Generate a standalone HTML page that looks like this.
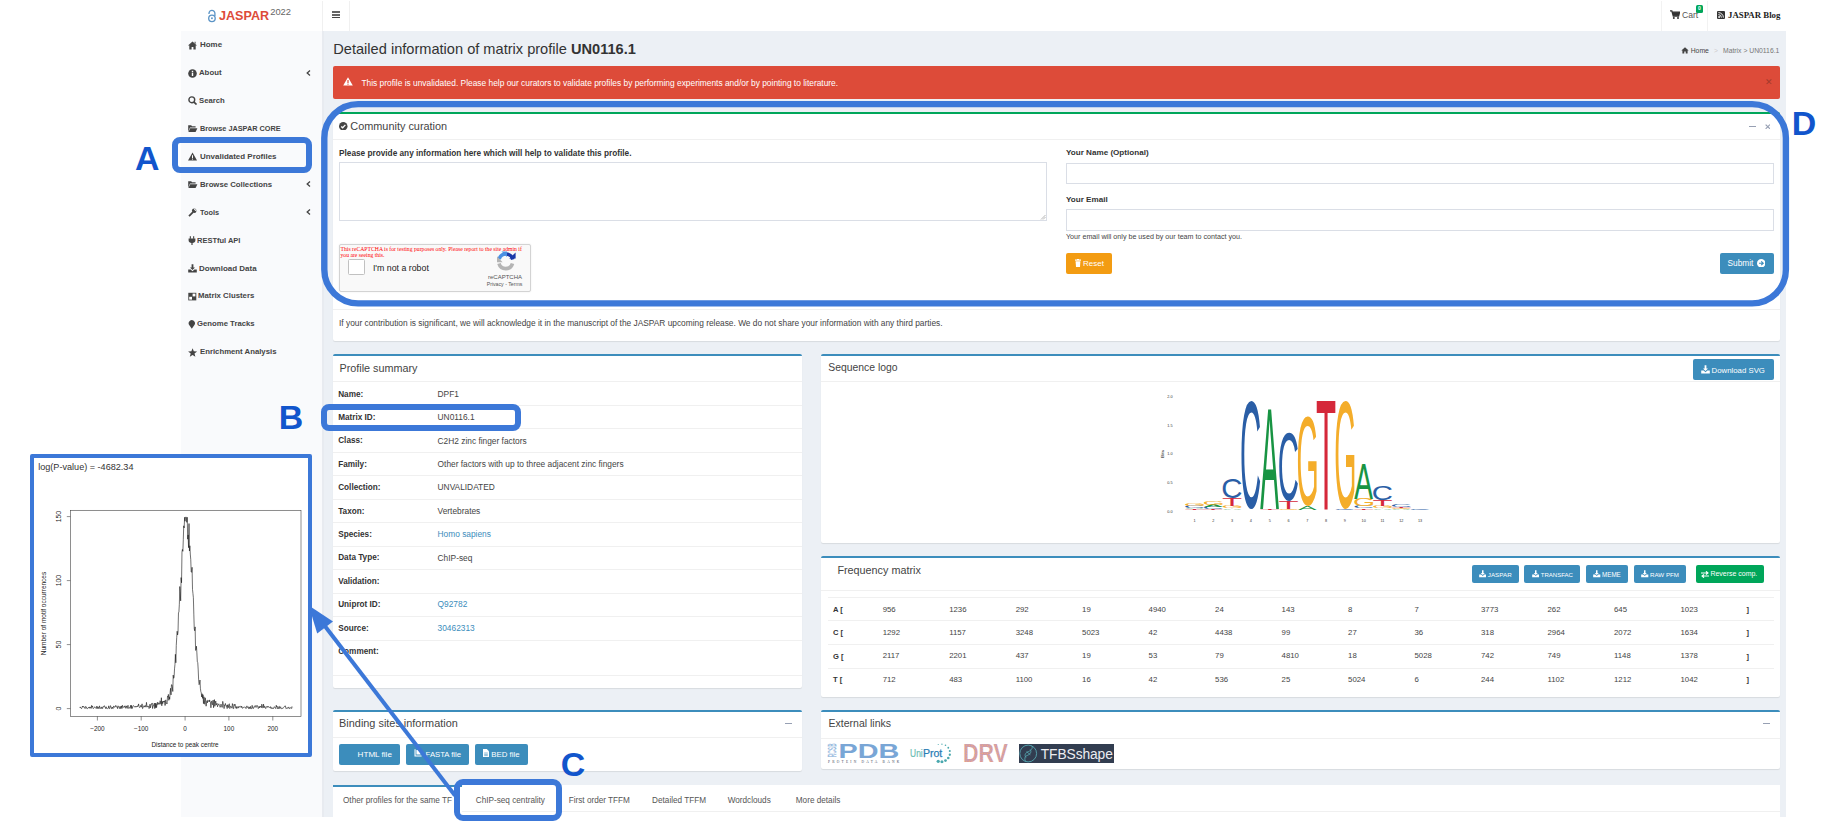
<!DOCTYPE html>
<html><head><meta charset="utf-8">
<style>
*{box-sizing:border-box}
html,body{margin:0;padding:0}
body{width:1829px;height:837px;position:relative;overflow:hidden;background:#fff;font-family:"Liberation Sans",sans-serif;color:#333}
.a{position:absolute}
.t{position:absolute;white-space:nowrap;line-height:1}
.b{font-weight:bold}
.box{position:absolute;background:#fff;border-top:2px solid #3c8dbc;border-radius:2px;box-shadow:0 1px 1px rgba(0,0,0,0.09)}
.hl{position:absolute;height:1px;background:#f0f0f0}
.btn{position:absolute;background:#3c8dbc;border-radius:2px;color:#fff}
.ann{position:absolute;border:6px solid #3c78d8}
.lbl{position:absolute;color:#1155cc;font-weight:bold;line-height:1;font-size:33px}
</style></head><body>
<div class="a" style="left:181px;top:0;width:1605px;height:31px;background:#fff"></div>
<div class="a" style="left:322px;top:1px;width:1px;height:30px;background:#f0f0f0"></div>
<div class="a" style="left:349px;top:1px;width:1px;height:30px;background:#f0f0f0"></div>
<div class="a" style="left:1661px;top:1px;width:1px;height:30px;background:#f2f2f2"></div>
<div class="a" style="left:1707px;top:1px;width:1px;height:30px;background:#f2f2f2"></div>
<svg class="a" style="left:206px;top:9px" width="12" height="14" viewBox="0 0 12 14">
 <path d="M3.0 4.9 V4.3 A2.95 2.95 0 0 1 8.9 4.3 V7" fill="none" stroke="#5b94c6" stroke-width="1.3"/>
 <circle cx="5.95" cy="9.3" r="3.25" fill="none" stroke="#5b94c6" stroke-width="1.35"/>
 <circle cx="5.95" cy="9.3" r="0.95" fill="#5b94c6"/>
</svg>
<div class="t b" style="left:219px;top:10px;font-size:12.6px;color:#dd4b39">JASPAR</div>
<div class="t" style="left:270.2px;top:7.4px;font-size:9.4px;color:#666">2022</div>
<div class="a" style="left:332px;top:11.2px;width:8px;height:1.5px;background:#666"></div>
<div class="a" style="left:332px;top:14.2px;width:8px;height:1.5px;background:#666"></div>
<div class="a" style="left:332px;top:17px;width:8px;height:1.3px;background:#444"></div>
<svg class="a" style="left:1670px;top:10px" width="10" height="9" viewBox="0 0 10 9">
 <path d="M0 0.8 H1.8 L3.3 6 H8.6 L9.6 2.2 H2.5" fill="none" stroke="#333" stroke-width="1.3"/>
 <rect x="3" y="2.2" width="6" height="3.6" fill="#333"/>
 <circle cx="3.8" cy="8" r="1" fill="#333"/><circle cx="8" cy="8" r="1" fill="#333"/>
</svg>
<div class="t" style="left:1682px;top:11px;font-size:8.6px;color:#555">Cart</div>
<div class="a" style="left:1696px;top:5px;width:7px;height:7.5px;background:#00a65a;border-radius:1.5px;color:#fff;font-size:5px;line-height:7.5px;text-align:center;font-weight:bold">0</div>
<svg class="a" style="left:1717px;top:11px" width="8" height="8" viewBox="0 0 8 8">
 <rect x="0" y="0" width="8" height="8" rx="1" fill="#333"/>
 <circle cx="2.1" cy="6" r="0.9" fill="#fff"/>
 <path d="M1.4 3.6 A3 3 0 0 1 4.4 6.6 M1.4 1.6 A5 5 0 0 1 6.4 6.6" fill="none" stroke="#fff" stroke-width="0.9"/>
</svg>
<div class="t b" style="left:1728px;top:10.8px;font-size:8.8px;font-family:'Liberation Serif',serif;color:#222">JASPAR Blog</div>
<div class="a" style="left:181px;top:31px;width:141px;height:786px;background:#f9fafc"></div>
<div class="a" style="left:322px;top:31px;width:2px;height:786px;background:#e8ebf0"></div>
<svg class="a" style="left:188.3px;top:40.6px" width="10" height="9" viewBox="0 0 10 9"><path d="M4.5 0.6 L0 4.6 H1.3 V8.5 H3.6 V6 H5.4 V8.5 H7.7 V4.6 H9 Z M6.6 0.8 H7.6 V3 L6.6 2.1Z" fill="#444"/></svg>
<div class="t b" style="left:200.4px;top:41.34px;font-size:8.1px;color:#444;transform:scaleX(0.9820);transform-origin:0 0;">Home</div>
<svg class="a" style="left:188px;top:68.5px" width="10" height="9" viewBox="0 0 10 9"><circle cx="4.5" cy="4.5" r="4.3" fill="#444"/><rect x="3.8" y="3.6" width="1.4" height="3.4" fill="#fff"/><rect x="3.8" y="1.8" width="1.4" height="1.2" fill="#fff"/></svg>
<div class="t b" style="left:199.3px;top:69.24px;font-size:8.1px;color:#444;transform:scaleX(0.9619);transform-origin:0 0;">About</div>
<svg class="a" style="left:305.5px;top:69.6px" width="5" height="6" viewBox="0 0 5 6"><path d="M4 0.6 L1.2 3 L4 5.4" fill="none" stroke="#444" stroke-width="1.3"/></svg>
<svg class="a" style="left:188px;top:96.4px" width="10" height="9" viewBox="0 0 10 9"><circle cx="3.8" cy="3.8" r="2.9" fill="none" stroke="#444" stroke-width="1.4"/><path d="M5.8 5.8 L8.5 8.5" stroke="#444" stroke-width="1.7"/></svg>
<div class="t b" style="left:199.3px;top:97.14px;font-size:8.1px;color:#444;transform:scaleX(0.9549);transform-origin:0 0;">Search</div>
<svg class="a" style="left:187.8px;top:124.3px" width="10" height="9" viewBox="0 0 10 9"><path d="M0.2 7.8 V1.2 H3.2 L4 2.2 H7.6 V3.6 H2 Z" fill="#444"/><path d="M0.4 8 L2.2 4.2 H9.4 L7.6 8 Z" fill="#444"/></svg>
<div class="t b" style="left:200.4px;top:125.04px;font-size:8.1px;color:#444;transform:scaleX(0.9020);transform-origin:0 0;">Browse JASPAR CORE</div>
<svg class="a" style="left:188px;top:152.2px" width="10" height="9" viewBox="0 0 10 9"><path d="M4.5 0.4 L9 8.4 H0 Z" fill="#444"/><rect x="4" y="3.2" width="1" height="2.8" fill="#fff"/><rect x="4" y="6.6" width="1" height="1" fill="#fff"/></svg>
<div class="t b" style="left:200.4px;top:152.94px;font-size:8.1px;color:#444;transform:scaleX(0.9837);transform-origin:0 0;">Unvalidated Profiles</div>
<svg class="a" style="left:187.8px;top:180.1px" width="10" height="9" viewBox="0 0 10 9"><path d="M0.2 7.8 V1.2 H3.2 L4 2.2 H7.6 V3.6 H2 Z" fill="#444"/><path d="M0.4 8 L2.2 4.2 H9.4 L7.6 8 Z" fill="#444"/></svg>
<div class="t b" style="left:200.4px;top:180.84px;font-size:8.1px;color:#444;transform:scaleX(0.9592);transform-origin:0 0;">Browse Collections</div>
<svg class="a" style="left:305.5px;top:181.2px" width="5" height="6" viewBox="0 0 5 6"><path d="M4 0.6 L1.2 3 L4 5.4" fill="none" stroke="#444" stroke-width="1.3"/></svg>
<svg class="a" style="left:188px;top:208.0px" width="10" height="9" viewBox="0 0 10 9"><path d="M1 8.2 L5 4.2" stroke="#444" stroke-width="1.8"/><circle cx="6.2" cy="2.8" r="2.3" fill="#444"/><path d="M6.5 0.4 L8.6 2.5 L7.5 3 L6 1.5Z" fill="#f9fafc"/></svg>
<div class="t b" style="left:199.5px;top:208.74px;font-size:8.1px;color:#444;transform:scaleX(0.9075);transform-origin:0 0;">Tools</div>
<svg class="a" style="left:305.5px;top:209.1px" width="5" height="6" viewBox="0 0 5 6"><path d="M4 0.6 L1.2 3 L4 5.4" fill="none" stroke="#444" stroke-width="1.3"/></svg>
<svg class="a" style="left:188px;top:235.9px" width="10" height="9" viewBox="0 0 10 9"><rect x="1.8" y="0.2" width="1.1" height="2.6" fill="#444"/><rect x="5.1" y="0.2" width="1.1" height="2.6" fill="#444"/><path d="M0.6 2.6 H7.4 V4.4 C7.4 6 6 6.8 4.6 6.9 V9 H3.4 V6.9 C2 6.8 0.6 6 0.6 4.4Z" fill="#444"/></svg>
<div class="t b" style="left:197.2px;top:236.64px;font-size:8.1px;color:#444;transform:scaleX(0.9248);transform-origin:0 0;">RESTful API</div>
<svg class="a" style="left:188px;top:263.8px" width="10" height="9" viewBox="0 0 10 9"><path d="M3.6 0.3 H5.4 V3.6 H7 L4.5 6.1 L2 3.6 H3.6Z" fill="#444"/><path d="M0.2 5.4 H2.6 L4.5 7.2 L6.4 5.4 H8.8 V8.6 H0.2Z" fill="#444"/></svg>
<div class="t b" style="left:199px;top:264.54px;font-size:8.1px;color:#444;transform:scaleX(0.9863);transform-origin:0 0;">Download Data</div>
<svg class="a" style="left:188px;top:291.7px" width="10" height="9" viewBox="0 0 10 9"><rect x="0.3" y="0.8" width="8" height="7.6" fill="#444"/><rect x="1.2" y="4.8" width="2.8" height="2.8" fill="#fff"/><rect x="4.6" y="1.6" width="2.8" height="2.8" fill="#fff"/></svg>
<div class="t b" style="left:198.2px;top:292.44px;font-size:8.1px;color:#444;transform:scaleX(0.9621);transform-origin:0 0;">Matrix Clusters</div>
<svg class="a" style="left:188px;top:319.6px" width="10" height="9" viewBox="0 0 10 9"><path d="M3.8 8.8 L1 4.8 A3.2 3.2 0 1 1 6.6 4.8Z" fill="#444"/></svg>
<div class="t b" style="left:197.2px;top:320.34px;font-size:8.1px;color:#444;transform:scaleX(0.9559);transform-origin:0 0;">Genome Tracks</div>
<svg class="a" style="left:188.2px;top:347.5px" width="10" height="9" viewBox="0 0 10 9"><path d="M4.6 0.2 L5.8 3.3 L9.1 3.4 L6.5 5.5 L7.4 8.7 L4.6 6.9 L1.8 8.7 L2.7 5.5 L0.1 3.4 L3.4 3.3Z" fill="#444"/></svg>
<div class="t b" style="left:200.3px;top:348.24px;font-size:8.1px;color:#444;transform:scaleX(0.9585);transform-origin:0 0;">Enrichment Analysis</div>
<div class="a" style="left:324px;top:31px;width:1462px;height:786px;background:#ecf0f5"></div>
<div class="t" style="left:333.3px;top:41.54px;font-size:14.6px;color:#333;">Detailed information of matrix profile <b>UN0116.1</b></div>
<svg class="a" style="left:1681px;top:47.4px" width="8" height="6.5" viewBox="0 0 9 8"><path d="M4.5 0.2 L0 4.2 H1.3 V8 H3.6 V5.6 H5.4 V8 H7.7 V4.2 H9 Z" fill="#444"/></svg>
<div class="t" style="left:1690.7px;top:47.84px;font-size:6.8px;color:#444;">Home</div>
<div class="t" style="left:1714px;top:47.84px;font-size:6.8px;color:#ccc;">&gt;</div>
<div class="t" style="left:1723px;top:47.84px;font-size:6.8px;color:#777;">Matrix &gt; UN0116.1</div>
<div class="a" style="left:333px;top:66px;width:1447px;height:33px;background:#dd4b39;border-radius:2px"></div>
<svg class="a" style="left:343px;top:77px" width="10" height="9" viewBox="0 0 10 9"><path d="M5 0.3 L9.8 8.6 H0.2 Z" fill="#fff"/><rect x="4.4" y="3" width="1.2" height="3" fill="#dd4b39"/><rect x="4.4" y="6.6" width="1.2" height="1.1" fill="#dd4b39"/></svg>
<div class="t" style="left:361.4px;top:79.09px;font-size:8.4px;color:#fff;">This profile is unvalidated. Please help our curators to validate profiles by performing experiments and/or by pointing to literature.</div>
<div class="t" style="left:1764.5px;top:78.2px;font-size:9px;color:#a33a2c">&#x2715;</div>
<div class="a" style="left:333px;top:112px;width:1447px;height:229px;background:#fff;border-top:2px solid #00a65a;border-radius:2px;box-shadow:0 1px 1px rgba(0,0,0,0.09)"></div>
<svg class="a" style="left:339.3px;top:121.8px" width="8.5" height="8.5" viewBox="0 0 10 10"><circle cx="5" cy="5" r="5" fill="#444"/><path d="M2.6 5.2 L4.3 6.8 L7.5 3.4" fill="none" stroke="#fff" stroke-width="1.5"/></svg>
<div class="t" style="left:350.3px;top:120.77px;font-size:10.9px;color:#444;">Community curation</div>
<div class="a" style="left:1749px;top:125.5px;width:7px;height:1.3px;background:#97a0b3"></div>
<svg class="a" style="left:1764.8px;top:123.8px" width="5.6" height="5.4" viewBox="0 0 6 6"><path d="M0.6 0.6 L5.4 5.4 M5.4 0.6 L0.6 5.4" stroke="#97a0b3" stroke-width="1.3"/></svg>
<div class="hl" style="left:333px;top:139px;width:1447px"></div>
<div class="t b" style="left:339px;top:149.51px;font-size:8.25px;color:#333;">Please provide any information here which will help to validate this profile.</div>
<div class="a" style="left:339px;top:162px;width:708px;height:59px;border:1px solid #dadee6;background:#fff"></div>
<svg class="a" style="left:1040px;top:214px" width="6" height="6" viewBox="0 0 6 6"><path d="M1 5.5 L5.5 1 M3 5.5 L5.5 3" stroke="#999" stroke-width="0.7"/></svg>
<div class="a" style="left:339px;top:243.5px;width:192px;height:48px;background:#f9f9f9;border:1px solid #d3d3d3;border-radius:2px;box-shadow:0 0 2px rgba(0,0,0,0.08)"></div>
<div class="t" style="left:340.5px;top:245.5px;font-size:5.7px;line-height:6.6px;color:#f00;font-family:'Liberation Serif',serif">This reCAPTCHA is for testing purposes only. Please report to the site admin if<br>you are seeing this.</div>
<div class="a" style="left:347.6px;top:258.7px;width:17.1px;height:16.8px;background:#fff;border:1.5px solid #c1c1c1;border-radius:1.5px"></div>
<div class="t" style="left:372.9px;top:263.65px;font-size:8.8px;color:#222;">I&#39;m not a robot</div>
<svg class="a" style="left:496px;top:251px" width="20" height="20" viewBox="0 0 20 20"><path d="M16.5 12.5 A7 7 0 0 1 3 12.5" fill="none" stroke="#b4b4b4" stroke-width="3.6"/><path d="M3.2 8 A7 7 0 0 1 10 3" fill="none" stroke="#4a90e2" stroke-width="3.6"/><path d="M10 3 A7 7 0 0 1 16.8 8.5" fill="none" stroke="#1c3aa9" stroke-width="3.6"/><path d="M13.2 7.6 L19.6 7.6 L19.6 1.4Z" fill="#1c3aa9"/><path d="M1 5.2 L1 11.2 L6.6 11.2Z" fill="#b4b4b4"/><path d="M5.5 0.6 L11 0.6 L11 6Z" fill="#4a90e2"/></svg><div class="t" style="left:488px;top:273.92px;font-size:6.0px;color:#555;">reCAPTCHA</div>
<div class="t" style="left:486.7px;top:281.60px;font-size:5.2px;color:#555;">Privacy - Terms</div>
<div class="t b" style="left:1066px;top:149.14px;font-size:8.1px;color:#333;">Your Name (Optional)</div>
<div class="a" style="left:1066px;top:162.5px;width:708px;height:21px;border:1px solid #dadee6;background:#fff"></div>
<div class="t b" style="left:1066px;top:195.84px;font-size:8.1px;color:#333;">Your Email</div>
<div class="a" style="left:1066px;top:209px;width:708px;height:21.5px;border:1px solid #dadee6;background:#fff"></div>
<div class="t" style="left:1066px;top:234.15px;font-size:7.15px;color:#444;">Your email will only be used by our team to contact you.</div>
<div class="a" style="left:1066px;top:252.7px;width:46px;height:21.3px;background:#f39c12;border-radius:2px"></div>
<svg class="a" style="left:1074.5px;top:258.5px" width="6" height="8" viewBox="0 0 6 8"><rect x="0" y="0.5" width="6" height="1.2" fill="#fff"/><rect x="2" y="0" width="2" height="1" fill="#fff"/><path d="M0.6 2.2 H5.4 L5 8 H1Z" fill="#fff"/></svg>
<div class="t" style="left:1083px;top:259.73px;font-size:8.0px;color:#fff;">Reset</div>
<div class="btn" style="left:1720.3px;top:252.7px;width:53.5px;height:21.3px"></div>
<div class="t" style="left:1727.5px;top:259.47px;font-size:8.3px;color:#fff;">Submit</div>
<svg class="a" style="left:1756.5px;top:258.5px" width="8.5" height="8.5" viewBox="0 0 10 10"><circle cx="5" cy="5" r="5" fill="#fff"/><path d="M2.4 5 H7.2 M5 2.8 L7.3 5 L5 7.2" fill="none" stroke="#3c8dbc" stroke-width="1.4"/></svg>
<div class="hl" style="left:333px;top:309px;width:1447px"></div>
<div class="t" style="left:339px;top:318.92px;font-size:8.36px;color:#444;">If your contribution is significant, we will acknowledge it in the manuscript of the JASPAR upcoming release. We do not share your information with any third parties.</div>
<div class="box" style="left:333px;top:354px;width:469px;height:334px"></div>
<div class="t" style="left:339.5px;top:362.66px;font-size:10.8px;color:#444;">Profile summary</div>
<div class="hl" style="left:333px;top:381px;width:469px"></div>
<div class="t b" style="left:338.2px;top:390.56px;font-size:8.2px;color:#333;">Name:</div>
<div class="t" style="left:437.6px;top:389.83px;font-size:8.35px;color:#444;">DPF1</div>
<div class="hl" style="left:333px;top:405.0px;width:469px"></div>
<div class="t b" style="left:338.2px;top:413.96px;font-size:8.2px;color:#333;">Matrix ID:</div>
<div class="t" style="left:437.6px;top:413.23px;font-size:8.35px;color:#444;">UN0116.1</div>
<div class="hl" style="left:333px;top:428.4px;width:469px"></div>
<div class="t b" style="left:338.2px;top:437.36px;font-size:8.2px;color:#333;">Class:</div>
<div class="t" style="left:437.6px;top:436.63px;font-size:8.35px;color:#444;">C2H2 zinc finger factors</div>
<div class="hl" style="left:333px;top:451.9px;width:469px"></div>
<div class="t b" style="left:338.2px;top:460.76px;font-size:8.2px;color:#333;">Family:</div>
<div class="t" style="left:437.6px;top:460.03px;font-size:8.35px;color:#444;">Other factors with up to three adjacent zinc fingers</div>
<div class="hl" style="left:333px;top:475.4px;width:469px"></div>
<div class="t b" style="left:338.2px;top:484.16px;font-size:8.2px;color:#333;">Collection:</div>
<div class="t" style="left:437.6px;top:483.43px;font-size:8.35px;color:#444;">UNVALIDATED</div>
<div class="hl" style="left:333px;top:498.8px;width:469px"></div>
<div class="t b" style="left:338.2px;top:507.56px;font-size:8.2px;color:#333;">Taxon:</div>
<div class="t" style="left:437.6px;top:506.83px;font-size:8.35px;color:#444;">Vertebrates</div>
<div class="hl" style="left:333px;top:522.2px;width:469px"></div>
<div class="t b" style="left:338.2px;top:530.96px;font-size:8.2px;color:#333;">Species:</div>
<div class="t" style="left:437.6px;top:530.23px;font-size:8.35px;color:#3c8dbc;">Homo sapiens</div>
<div class="hl" style="left:333px;top:545.7px;width:469px"></div>
<div class="t b" style="left:338.2px;top:554.36px;font-size:8.2px;color:#333;">Data Type:</div>
<div class="t" style="left:437.6px;top:553.63px;font-size:8.35px;color:#444;">ChIP-seq</div>
<div class="hl" style="left:333px;top:569.1px;width:469px"></div>
<div class="t b" style="left:338.2px;top:577.76px;font-size:8.2px;color:#333;">Validation:</div>
<div class="hl" style="left:333px;top:592.6px;width:469px"></div>
<div class="t b" style="left:338.2px;top:601.16px;font-size:8.2px;color:#333;">Uniprot ID:</div>
<div class="t" style="left:437.6px;top:600.43px;font-size:8.35px;color:#3c8dbc;">Q92782</div>
<div class="hl" style="left:333px;top:616.0px;width:469px"></div>
<div class="t b" style="left:338.2px;top:624.56px;font-size:8.2px;color:#333;">Source:</div>
<div class="t" style="left:437.6px;top:623.83px;font-size:8.35px;color:#3c8dbc;">30462313</div>
<div class="hl" style="left:333px;top:639.5px;width:469px"></div>
<div class="t b" style="left:338.2px;top:647.96px;font-size:8.2px;color:#333;">Comment:</div>
<div class="hl" style="left:333px;top:675px;width:469px"></div>
<div class="box" style="left:821px;top:354px;width:959px;height:189px"></div>
<div class="t" style="left:828.3px;top:362.89px;font-size:10.4px;color:#444;">Sequence logo</div>
<div class="hl" style="left:821px;top:381px;width:959px"></div>
<div class="btn" style="left:1693px;top:359px;width:81px;height:21.3px"></div>
<svg class="a" style="left:1700.5px;top:364.8px" width="9" height="9" viewBox="0 0 9 9"><path d="M3.6 0.3 H5.4 V3.6 H7 L4.5 6.1 L2 3.6 H3.6Z" fill="#fff"/><path d="M0.2 5.4 H2.6 L4.5 7.2 L6.4 5.4 H8.8 V8.6 H0.2Z" fill="#fff"/></svg>
<div class="t" style="left:1711.5px;top:366.78px;font-size:7.82px;color:#fff;">Download SVG</div>
<div class="box" style="left:821px;top:556px;width:959px;height:141px"></div>
<div class="t" style="left:837.4px;top:565.16px;font-size:10.8px;color:#444;">Frequency matrix</div>
<div class="hl" style="left:821px;top:589.5px;width:959px"></div>
<div class="btn" style="left:1472px;top:564.5px;width:47.2px;height:18.5px"></div>
<svg class="a" style="left:1478.8px;top:570px" width="7.5" height="7.5" viewBox="0 0 9 9"><path d="M3.6 0.3 H5.4 V3.6 H7 L4.5 6.1 L2 3.6 H3.6Z" fill="#fff"/><path d="M0.2 5.4 H2.6 L4.5 7.2 L6.4 5.4 H8.8 V8.6 H0.2Z" fill="#fff"/></svg>
<div class="t" style="left:1487.8px;top:571.70px;font-size:6.26px;color:#fff;">JASPAR</div>
<div class="btn" style="left:1524.3px;top:564.5px;width:56.1px;height:18.5px"></div>
<svg class="a" style="left:1531.7px;top:570px" width="7.5" height="7.5" viewBox="0 0 9 9"><path d="M3.6 0.3 H5.4 V3.6 H7 L4.5 6.1 L2 3.6 H3.6Z" fill="#fff"/><path d="M0.2 5.4 H2.6 L4.5 7.2 L6.4 5.4 H8.8 V8.6 H0.2Z" fill="#fff"/></svg>
<div class="t" style="left:1540.7px;top:571.88px;font-size:6.05px;color:#fff;">TRANSFAC</div>
<div class="btn" style="left:1586.4px;top:564.5px;width:41.8px;height:18.5px"></div>
<svg class="a" style="left:1593px;top:570px" width="7.5" height="7.5" viewBox="0 0 9 9"><path d="M3.6 0.3 H5.4 V3.6 H7 L4.5 6.1 L2 3.6 H3.6Z" fill="#fff"/><path d="M0.2 5.4 H2.6 L4.5 7.2 L6.4 5.4 H8.8 V8.6 H0.2Z" fill="#fff"/></svg>
<div class="t" style="left:1602px;top:571.69px;font-size:6.27px;color:#fff;">MEME</div>
<div class="btn" style="left:1634.2px;top:564.5px;width:51.8px;height:18.5px"></div>
<svg class="a" style="left:1641px;top:570px" width="7.5" height="7.5" viewBox="0 0 9 9"><path d="M3.6 0.3 H5.4 V3.6 H7 L4.5 6.1 L2 3.6 H3.6Z" fill="#fff"/><path d="M0.2 5.4 H2.6 L4.5 7.2 L6.4 5.4 H8.8 V8.6 H0.2Z" fill="#fff"/></svg>
<div class="t" style="left:1650px;top:571.76px;font-size:6.19px;color:#fff;">RAW PFM</div>
<div class="a" style="left:1695.5px;top:564.5px;width:68.7px;height:18.5px;background:#00a65a;border-radius:2px"></div>
<svg class="a" style="left:1701px;top:570.5px" width="8" height="7" viewBox="0 0 8 7"><path d="M0 2 H6.5 M5 0.3 L7 2 L5 3.7 M8 5 H1.5 M3 3.3 L1 5 L3 6.7" fill="none" stroke="#fff" stroke-width="1.1"/></svg>
<div class="t" style="left:1710.4px;top:571.10px;font-size:6.97px;color:#fff;">Reverse comp.</div>
<div class="hl" style="left:828px;top:597px;width:946px"></div>
<div class="t b" style="left:833px;top:605.77px;font-size:7.6px;color:#333;">A [</div>
<div class="t" style="left:882.7px;top:605.60px;font-size:7.8px;color:#444;">956</div>
<div class="t" style="left:949.2px;top:605.60px;font-size:7.8px;color:#444;">1236</div>
<div class="t" style="left:1015.7px;top:605.60px;font-size:7.8px;color:#444;">292</div>
<div class="t" style="left:1082.1px;top:605.60px;font-size:7.8px;color:#444;">19</div>
<div class="t" style="left:1148.6px;top:605.60px;font-size:7.8px;color:#444;">4940</div>
<div class="t" style="left:1215.1px;top:605.60px;font-size:7.8px;color:#444;">24</div>
<div class="t" style="left:1281.6px;top:605.60px;font-size:7.8px;color:#444;">143</div>
<div class="t" style="left:1348.1px;top:605.60px;font-size:7.8px;color:#444;">8</div>
<div class="t" style="left:1414.5px;top:605.60px;font-size:7.8px;color:#444;">7</div>
<div class="t" style="left:1481.0px;top:605.60px;font-size:7.8px;color:#444;">3773</div>
<div class="t" style="left:1547.5px;top:605.60px;font-size:7.8px;color:#444;">262</div>
<div class="t" style="left:1614.0px;top:605.60px;font-size:7.8px;color:#444;">645</div>
<div class="t" style="left:1680.5px;top:605.60px;font-size:7.8px;color:#444;">1023</div>
<div class="t b" style="left:1746.5px;top:605.93px;font-size:7.4px;color:#333;">]</div>
<div class="hl" style="left:828px;top:620.4px;width:946px"></div>
<div class="t b" style="left:833px;top:629.14px;font-size:7.6px;color:#333;">C [</div>
<div class="t" style="left:882.7px;top:628.97px;font-size:7.8px;color:#444;">1292</div>
<div class="t" style="left:949.2px;top:628.97px;font-size:7.8px;color:#444;">1157</div>
<div class="t" style="left:1015.7px;top:628.97px;font-size:7.8px;color:#444;">3248</div>
<div class="t" style="left:1082.1px;top:628.97px;font-size:7.8px;color:#444;">5023</div>
<div class="t" style="left:1148.6px;top:628.97px;font-size:7.8px;color:#444;">42</div>
<div class="t" style="left:1215.1px;top:628.97px;font-size:7.8px;color:#444;">4438</div>
<div class="t" style="left:1281.6px;top:628.97px;font-size:7.8px;color:#444;">99</div>
<div class="t" style="left:1348.1px;top:628.97px;font-size:7.8px;color:#444;">27</div>
<div class="t" style="left:1414.5px;top:628.97px;font-size:7.8px;color:#444;">36</div>
<div class="t" style="left:1481.0px;top:628.97px;font-size:7.8px;color:#444;">318</div>
<div class="t" style="left:1547.5px;top:628.97px;font-size:7.8px;color:#444;">2964</div>
<div class="t" style="left:1614.0px;top:628.97px;font-size:7.8px;color:#444;">2072</div>
<div class="t" style="left:1680.5px;top:628.97px;font-size:7.8px;color:#444;">1634</div>
<div class="t b" style="left:1746.5px;top:629.30px;font-size:7.4px;color:#333;">]</div>
<div class="hl" style="left:828px;top:643.9px;width:946px"></div>
<div class="t b" style="left:833px;top:652.51px;font-size:7.6px;color:#333;">G [</div>
<div class="t" style="left:882.7px;top:652.34px;font-size:7.8px;color:#444;">2117</div>
<div class="t" style="left:949.2px;top:652.34px;font-size:7.8px;color:#444;">2201</div>
<div class="t" style="left:1015.7px;top:652.34px;font-size:7.8px;color:#444;">437</div>
<div class="t" style="left:1082.1px;top:652.34px;font-size:7.8px;color:#444;">19</div>
<div class="t" style="left:1148.6px;top:652.34px;font-size:7.8px;color:#444;">53</div>
<div class="t" style="left:1215.1px;top:652.34px;font-size:7.8px;color:#444;">79</div>
<div class="t" style="left:1281.6px;top:652.34px;font-size:7.8px;color:#444;">4810</div>
<div class="t" style="left:1348.1px;top:652.34px;font-size:7.8px;color:#444;">18</div>
<div class="t" style="left:1414.5px;top:652.34px;font-size:7.8px;color:#444;">5028</div>
<div class="t" style="left:1481.0px;top:652.34px;font-size:7.8px;color:#444;">742</div>
<div class="t" style="left:1547.5px;top:652.34px;font-size:7.8px;color:#444;">749</div>
<div class="t" style="left:1614.0px;top:652.34px;font-size:7.8px;color:#444;">1148</div>
<div class="t" style="left:1680.5px;top:652.34px;font-size:7.8px;color:#444;">1378</div>
<div class="t b" style="left:1746.5px;top:652.67px;font-size:7.4px;color:#333;">]</div>
<div class="hl" style="left:828px;top:667.5px;width:946px"></div>
<div class="t b" style="left:833px;top:675.88px;font-size:7.6px;color:#333;">T [</div>
<div class="t" style="left:882.7px;top:675.71px;font-size:7.8px;color:#444;">712</div>
<div class="t" style="left:949.2px;top:675.71px;font-size:7.8px;color:#444;">483</div>
<div class="t" style="left:1015.7px;top:675.71px;font-size:7.8px;color:#444;">1100</div>
<div class="t" style="left:1082.1px;top:675.71px;font-size:7.8px;color:#444;">16</div>
<div class="t" style="left:1148.6px;top:675.71px;font-size:7.8px;color:#444;">42</div>
<div class="t" style="left:1215.1px;top:675.71px;font-size:7.8px;color:#444;">536</div>
<div class="t" style="left:1281.6px;top:675.71px;font-size:7.8px;color:#444;">25</div>
<div class="t" style="left:1348.1px;top:675.71px;font-size:7.8px;color:#444;">5024</div>
<div class="t" style="left:1414.5px;top:675.71px;font-size:7.8px;color:#444;">6</div>
<div class="t" style="left:1481.0px;top:675.71px;font-size:7.8px;color:#444;">244</div>
<div class="t" style="left:1547.5px;top:675.71px;font-size:7.8px;color:#444;">1102</div>
<div class="t" style="left:1614.0px;top:675.71px;font-size:7.8px;color:#444;">1212</div>
<div class="t" style="left:1680.5px;top:675.71px;font-size:7.8px;color:#444;">1042</div>
<div class="t b" style="left:1746.5px;top:676.04px;font-size:7.4px;color:#333;">]</div>
<div class="box" style="left:333px;top:710px;width:469px;height:61px"></div>
<div class="t" style="left:339.1px;top:718.37px;font-size:10.9px;color:#444;">Binding sites information</div>
<div class="a" style="left:785px;top:722.5px;width:7px;height:1.3px;background:#97a0b3"></div>
<div class="hl" style="left:333px;top:736.5px;width:469px"></div>
<div class="btn" style="left:339px;top:743.5px;width:61.3px;height:21.5px"></div>
<div class="t" style="left:357.6px;top:750.64px;font-size:8.1px;color:#fff;">HTML file</div>
<div class="btn" style="left:406.4px;top:743.5px;width:62.4px;height:21.5px"></div>
<svg class="a" style="left:414px;top:749px" width="8" height="8" viewBox="0 0 8 8"><path d="M0.5 0.3 V7.5 H7.6 V6.4 H1.6 V0.3Z M2.4 5.6 V1 H4.6 L6.6 3 V5.6Z" fill="#fff"/></svg>
<div class="t" style="left:425.6px;top:750.96px;font-size:7.73px;color:#fff;">FASTA file</div>
<div class="btn" style="left:474.9px;top:744px;width:52.8px;height:21px"></div>
<svg class="a" style="left:482.5px;top:749px" width="6" height="8" viewBox="0 0 6 8"><path d="M0 0 H3.8 L6 2.2 V8 H0Z" fill="#fff"/><path d="M1.2 4 H4.8 M1.2 5.4 H4.8 M1.2 6.6 H4.8" stroke="#3c8dbc" stroke-width="0.6"/></svg>
<div class="t" style="left:491.3px;top:750.87px;font-size:7.83px;color:#fff;">BED file</div>
<div class="box" style="left:821px;top:710px;width:959px;height:59px"></div>
<div class="t" style="left:828.6px;top:718.21px;font-size:10.5px;color:#444;">External links</div>
<div class="a" style="left:1763px;top:722.5px;width:7px;height:1.3px;background:#97a0b3"></div>
<div class="hl" style="left:821px;top:737.5px;width:959px"></div>
<svg class="a" style="left:0;top:0;overflow:visible" width="1829" height="837">
<text transform="translate(836.2,757.2) rotate(-90)" font-family="Liberation Sans" font-size="11.4" fill="none" stroke="#7aa7d6" stroke-width="0.55" textLength="13.6" lengthAdjust="spacingAndGlyphs">RCSB</text>
<text x="838.6" y="757.6" font-family="Liberation Sans" font-weight="bold" font-size="19.7" fill="#79a6d6" textLength="60.8" lengthAdjust="spacingAndGlyphs">PDB</text>
<text x="828" y="762.6" font-family="Liberation Serif" font-size="3.5" fill="#3d4a5c" textLength="71.2" lengthAdjust="spacing">PROTEIN DATA BANK</text>
<text x="910.1" y="757.2" font-family="Liberation Sans" font-size="10.4" fill="#6cbdb3" stroke="#6cbdb3" stroke-width="0.2" textLength="12.6" lengthAdjust="spacingAndGlyphs">Uni</text>
<text x="922.9" y="757.2" font-family="Liberation Sans" font-size="10.4" fill="#2a7cb5" stroke="#2a7cb5" stroke-width="0.25" textLength="19.4" lengthAdjust="spacingAndGlyphs">Prot</text>
<g fill="#4aa8ae"><circle cx="938.22" cy="744.53" r="0.55"/><circle cx="941.94" cy="744.15" r="0.67"/><circle cx="945.50" cy="745.28" r="0.79"/><circle cx="948.28" cy="747.73" r="0.91"/><circle cx="949.80" cy="751.07" r="1.03"/><circle cx="949.80" cy="754.73" r="1.15"/><circle cx="948.28" cy="758.07" r="1.27"/><circle cx="945.50" cy="760.52" r="1.39"/><circle cx="941.94" cy="761.65" r="1.51"/><circle cx="938.22" cy="761.27" r="1.63"/></g>
<defs><pattern id="drvp" width="2.6" height="2.6" patternUnits="userSpaceOnUse"><rect width="2.6" height="2.6" fill="#e0909a"/><circle cx="0.8" cy="0.8" r="0.6" fill="#98c4e4"/><circle cx="2" cy="1.9" r="0.5" fill="#e6d27a"/></pattern></defs>
<text x="963.1" y="762.3" font-family="Liberation Sans" font-weight="bold" font-size="25.6" fill="url(#drvp)" textLength="44.7" lengthAdjust="spacingAndGlyphs">DRV</text>
</svg>
<div class="a" style="left:1019px;top:744px;width:95px;height:18.8px;background:#323d50"></div>
<svg class="a" style="left:0;top:0;overflow:visible" width="1829" height="837"><circle cx="1028.2" cy="753.5" r="8.4" fill="none" stroke="#5ab4bc" stroke-width="0.8"/><path d="M1031.5 745.6 C1033.5 748 1031 750.5 1028.5 751.5 C1025.5 752.6 1024 755 1026 757.5 M1030.2 749.5 C1032 752 1030 754.6 1027 755.5 C1024.6 756.3 1024.4 759 1025.4 761.2 M1026.6 751.6 L1030.4 754.8" fill="none" stroke="#5ab4bc" stroke-width="0.75"/></svg>
<div class="t" style="left:1040.8px;top:747.62px;font-size:13.8px;color:#ececf0;letter-spacing:-0.1px">TFBSshape</div>
<div class="a" style="left:333px;top:785px;width:1447px;height:40px;background:#fff"></div>
<div class="a" style="left:333px;top:785px;width:129px;height:2px;background:#3c8dbc"></div>
<div class="t" style="left:343px;top:796.66px;font-size:8.2px;color:#555;">Other profiles for the same TF</div>
<div class="t" style="left:475.8px;top:796.66px;font-size:8.2px;color:#555;">ChIP-seq centrality</div>
<div class="t" style="left:568.7px;top:796.66px;font-size:8.2px;color:#555;">First order TFFM</div>
<div class="t" style="left:652.1px;top:796.66px;font-size:8.2px;color:#555;">Detailed TFFM</div>
<div class="t" style="left:727.7px;top:796.66px;font-size:8.2px;color:#555;">Wordclouds</div>
<div class="t" style="left:795.8px;top:796.66px;font-size:8.2px;color:#555;">More details</div>
<div class="hl" style="left:462px;top:810.8px;width:1318px"></div>
<div class="a" style="left:0;top:817px;width:1829px;height:20px;background:#fff"></div>
<svg class="a" style="left:0;top:0;overflow:visible" width="1829" height="837"><text transform="translate(1184.46,509.80) scale(0.3290,0.0116)" font-size="100" font-family="Liberation Sans" fill="#d5283a">T</text><text transform="translate(1185.15,509.00) scale(0.2805,0.0174)" font-size="100" font-family="Liberation Sans" fill="#189443">A</text><text transform="translate(1183.71,507.77) scale(0.2937,0.0311)" font-size="100" font-family="Liberation Sans" fill="#2a5ea6">C</text><text transform="translate(1183.77,505.56) scale(0.2849,0.0395)" font-size="100" font-family="Liberation Sans" fill="#f4ad2a">G</text><text transform="translate(1203.26,509.80) scale(0.3290,0.0087)" font-size="100" font-family="Liberation Sans" fill="#d5283a">T</text><text transform="translate(1202.51,509.17) scale(0.2937,0.0268)" font-size="100" font-family="Liberation Sans" fill="#2a5ea6">C</text><text transform="translate(1203.95,507.30) scale(0.2805,0.0349)" font-size="100" font-family="Liberation Sans" fill="#189443">A</text><text transform="translate(1202.57,504.85) scale(0.2849,0.0494)" font-size="100" font-family="Liberation Sans" fill="#f4ad2a">G</text><text transform="translate(1222.75,509.80) scale(0.2805,0.0233)" font-size="100" font-family="Liberation Sans" fill="#189443">A</text><text transform="translate(1221.37,508.17) scale(0.2849,0.0268)" font-size="100" font-family="Liberation Sans" fill="#f4ad2a">G</text><text transform="translate(1222.06,506.30) scale(0.3290,0.1119)" font-size="100" font-family="Liberation Sans" fill="#d5283a">T</text><text transform="translate(1221.31,498.32) scale(0.2937,0.2825)" font-size="100" font-family="Liberation Sans" fill="#2a5ea6">C</text><text transform="translate(1240.11,508.31) scale(0.2937,1.5254)" font-size="100" font-family="Liberation Sans" fill="#2a5ea6">C</text><text transform="translate(1259.66,509.80) scale(0.3290,0.0131)" font-size="100" font-family="Liberation Sans" fill="#d5283a">T</text><text transform="translate(1260.35,508.90) scale(0.2805,1.4477)" font-size="100" font-family="Liberation Sans" fill="#189443">A</text><text transform="translate(1277.77,509.79) scale(0.2849,0.0113)" font-size="100" font-family="Liberation Sans" fill="#f4ad2a">G</text><text transform="translate(1278.46,509.00) scale(0.3290,0.1148)" font-size="100" font-family="Liberation Sans" fill="#d5283a">T</text><text transform="translate(1277.71,500.16) scale(0.2937,0.9661)" font-size="100" font-family="Liberation Sans" fill="#2a5ea6">C</text><text transform="translate(1297.95,509.80) scale(0.2805,0.0552)" font-size="100" font-family="Liberation Sans" fill="#189443">A</text><text transform="translate(1296.57,504.77) scale(0.2849,1.2570)" font-size="100" font-family="Liberation Sans" fill="#f4ad2a">G</text><text transform="translate(1316.06,509.80) scale(0.3290,1.5698)" font-size="100" font-family="Liberation Sans" fill="#d5283a">T</text><text transform="translate(1334.11,509.79) scale(0.2937,0.0085)" font-size="100" font-family="Liberation Sans" fill="#2a5ea6">C</text><text transform="translate(1334.17,507.71) scale(0.2849,1.5212)" font-size="100" font-family="Liberation Sans" fill="#f4ad2a">G</text><text transform="translate(1353.66,509.80) scale(0.3290,0.0218)" font-size="100" font-family="Liberation Sans" fill="#d5283a">T</text><text transform="translate(1352.91,508.27) scale(0.2937,0.0268)" font-size="100" font-family="Liberation Sans" fill="#2a5ea6">C</text><text transform="translate(1352.97,506.29) scale(0.2849,0.1116)" font-size="100" font-family="Liberation Sans" fill="#f4ad2a">G</text><text transform="translate(1354.35,498.50) scale(0.2805,0.5044)" font-size="100" font-family="Liberation Sans" fill="#189443">A</text><text transform="translate(1373.15,509.80) scale(0.2805,0.0189)" font-size="100" font-family="Liberation Sans" fill="#189443">A</text><text transform="translate(1371.77,508.47) scale(0.2849,0.0297)" font-size="100" font-family="Liberation Sans" fill="#f4ad2a">G</text><text transform="translate(1372.46,506.40) scale(0.3290,0.0901)" font-size="100" font-family="Liberation Sans" fill="#d5283a">T</text><text transform="translate(1371.71,500.00) scale(0.2937,0.2076)" font-size="100" font-family="Liberation Sans" fill="#2a5ea6">C</text><text transform="translate(1391.95,509.80) scale(0.2805,0.0116)" font-size="100" font-family="Liberation Sans" fill="#189443">A</text><text transform="translate(1390.57,508.98) scale(0.2849,0.0169)" font-size="100" font-family="Liberation Sans" fill="#f4ad2a">G</text><text transform="translate(1391.26,507.80) scale(0.3290,0.0116)" font-size="100" font-family="Liberation Sans" fill="#d5283a">T</text><text transform="translate(1390.51,506.96) scale(0.2937,0.0367)" font-size="100" font-family="Liberation Sans" fill="#2a5ea6">C</text><text transform="translate(1409.31,509.79) scale(0.2937,0.0071)" font-size="100" font-family="Liberation Sans" fill="#2a5ea6">C</text><text x="1172.5" y="397.6" font-size="3.8" text-anchor="end" font-family="Liberation Sans" fill="#333">2.0</text><text x="1172.5" y="426.5" font-size="3.8" text-anchor="end" font-family="Liberation Sans" fill="#333">1.5</text><text x="1172.5" y="455.3" font-size="3.8" text-anchor="end" font-family="Liberation Sans" fill="#333">1.0</text><text x="1172.5" y="484.2" font-size="3.8" text-anchor="end" font-family="Liberation Sans" fill="#333">0.5</text><text x="1172.5" y="513.1" font-size="3.8" text-anchor="end" font-family="Liberation Sans" fill="#333">0.0</text><text transform="translate(1164.4,454) rotate(-90)" font-size="4.2" text-anchor="middle" font-family="Liberation Sans" font-weight="bold" fill="#555">Bits</text><text x="1194.5" y="521.8" font-size="3.8" text-anchor="middle" font-family="Liberation Sans" fill="#333">1</text><text x="1213.3" y="521.8" font-size="3.8" text-anchor="middle" font-family="Liberation Sans" fill="#333">2</text><text x="1232.1" y="521.8" font-size="3.8" text-anchor="middle" font-family="Liberation Sans" fill="#333">3</text><text x="1250.9" y="521.8" font-size="3.8" text-anchor="middle" font-family="Liberation Sans" fill="#333">4</text><text x="1269.7" y="521.8" font-size="3.8" text-anchor="middle" font-family="Liberation Sans" fill="#333">5</text><text x="1288.5" y="521.8" font-size="3.8" text-anchor="middle" font-family="Liberation Sans" fill="#333">6</text><text x="1307.3" y="521.8" font-size="3.8" text-anchor="middle" font-family="Liberation Sans" fill="#333">7</text><text x="1326.1" y="521.8" font-size="3.8" text-anchor="middle" font-family="Liberation Sans" fill="#333">8</text><text x="1344.9" y="521.8" font-size="3.8" text-anchor="middle" font-family="Liberation Sans" fill="#333">9</text><text x="1363.7" y="521.8" font-size="3.8" text-anchor="middle" font-family="Liberation Sans" fill="#333">10</text><text x="1382.5" y="521.8" font-size="3.8" text-anchor="middle" font-family="Liberation Sans" fill="#333">11</text><text x="1401.3" y="521.8" font-size="3.8" text-anchor="middle" font-family="Liberation Sans" fill="#333">12</text><text x="1420.1" y="521.8" font-size="3.8" text-anchor="middle" font-family="Liberation Sans" fill="#333">13</text></svg>
<div class="a" style="left:30px;top:454px;width:282px;height:303px;background:#fff;border:4px solid #3c78d8;border-radius:2px"></div>
<div class="t" style="left:38.2px;top:462.50px;font-size:9.1px;color:#333;">log(P-value) = -4682.34</div>
<svg class="a" style="left:0;top:0;overflow:visible" width="1829" height="837"><rect x="70.4" y="510.3" width="230.6" height="206.0" fill="none" stroke="#444" stroke-width="0.6"/><polyline points="79.81,707.89 80.25,706.92 80.69,707.85 81.13,707.97 81.56,708.60 82.00,707.84 82.44,706.16 82.88,707.03 83.32,706.25 83.76,707.25 84.20,707.06 84.63,707.33 85.07,708.60 85.51,706.48 85.95,706.92 86.39,706.93 86.83,708.60 87.26,708.60 87.70,708.60 88.14,708.15 88.58,707.17 89.02,707.62 89.46,706.90 89.90,708.37 90.33,707.17 90.77,707.06 91.21,708.40 91.65,705.38 92.09,706.85 92.53,706.03 92.97,708.34 93.40,708.49 93.84,707.99 94.28,707.69 94.72,706.75 95.16,707.23 95.60,708.12 96.03,708.60 96.47,708.21 96.91,705.99 97.35,708.57 97.79,707.23 98.23,707.00 98.67,708.60 99.10,707.48 99.54,705.87 99.98,708.60 100.42,707.95 100.86,707.67 101.30,708.58 101.74,706.90 102.17,707.61 102.61,708.60 103.05,706.47 103.49,706.67 103.93,706.31 104.37,705.68 104.80,707.06 105.24,707.37 105.68,708.60 106.12,706.73 106.56,708.30 107.00,708.09 107.44,708.60 107.87,708.60 108.31,708.19 108.75,705.84 109.19,708.60 109.63,708.60 110.07,707.19 110.51,705.63 110.94,706.74 111.38,708.60 111.82,708.60 112.26,707.02 112.70,708.43 113.14,708.60 113.57,706.20 114.01,706.04 114.45,707.26 114.89,707.14 115.33,706.89 115.77,705.37 116.21,706.64 116.64,706.76 117.08,706.72 117.52,708.60 117.96,705.75 118.40,706.17 118.84,706.72 119.28,708.60 119.71,708.24 120.15,706.29 120.59,708.60 121.03,707.63 121.47,706.03 121.91,708.60 122.34,705.23 122.78,706.63 123.22,707.55 123.66,706.91 124.10,706.47 124.54,707.17 124.98,705.78 125.41,708.20 125.85,707.86 126.29,705.89 126.73,707.25 127.17,708.47 127.61,705.98 128.05,705.26 128.48,707.85 128.92,708.60 129.36,707.41 129.80,707.42 130.24,707.61 130.68,705.24 131.11,708.60 131.55,705.41 131.99,708.60 132.43,708.23 132.87,706.23 133.31,705.51 133.75,705.87 134.18,706.58 134.62,706.85 135.06,706.81 135.50,706.19 135.94,707.25 136.38,706.57 136.81,706.13 137.25,706.93 137.69,705.80 138.13,706.06 138.57,703.91 139.01,706.36 139.45,707.45 139.88,707.35 140.32,706.78 140.76,705.35 141.20,707.22 141.64,706.09 142.08,703.85 142.52,708.60 142.95,708.32 143.39,706.17 143.83,705.90 144.27,706.11 144.71,707.12 145.15,705.37 145.59,705.92 146.02,707.16 146.46,702.37 146.90,705.66 147.34,707.10 147.78,706.31 148.22,706.47 148.65,706.15 149.09,708.60 149.53,706.76 149.97,704.18 150.41,707.82 150.85,705.88 151.29,704.06 151.72,704.15 152.16,702.96 152.60,708.52 153.04,706.07 153.48,705.98 153.92,704.17 154.36,703.23 154.79,708.60 155.23,703.04 155.67,707.68 156.11,703.59 156.55,707.63 156.99,704.36 157.42,702.28 157.86,704.78 158.30,704.01 158.74,702.69 159.18,703.88 159.62,704.22 160.06,700.79 160.49,701.63 160.93,704.27 161.37,697.73 161.81,705.81 162.25,701.24 162.69,703.61 163.12,702.56 163.56,701.09 164.00,701.94 164.44,700.75 164.88,705.51 165.32,705.25 165.76,699.89 166.19,703.38 166.63,703.19 167.07,703.93 167.51,696.38 167.95,697.11 168.39,694.40 168.83,700.33 169.26,696.81 169.70,699.24 170.14,692.30 170.58,688.26 171.02,694.88 171.46,684.76 171.90,684.69 172.33,686.79 172.77,691.49 173.21,675.10 173.65,678.30 174.09,677.22 174.53,668.84 174.96,664.57 175.40,654.31 175.84,662.77 176.28,645.47 176.72,637.43 177.16,631.22 177.60,634.96 178.03,632.04 178.47,612.92 178.91,611.88 179.35,604.28 179.79,586.53 180.23,591.89 180.67,600.89 181.10,577.58 181.54,582.80 181.98,552.12 182.42,549.45 182.86,551.30 183.30,539.53 183.73,525.82 184.17,527.94 184.61,517.24 185.05,521.24 185.49,517.24 185.93,517.24 186.37,517.24 186.80,522.32 187.24,517.24 187.68,539.17 188.12,534.91 188.56,547.70 189.00,523.56 189.44,551.03 189.87,545.77 190.31,554.07 190.75,559.64 191.19,571.86 191.63,572.34 192.07,567.31 192.50,589.44 192.94,593.44 193.38,597.72 193.82,614.14 194.26,628.79 194.70,630.78 195.14,626.88 195.57,650.40 196.01,649.80 196.45,646.20 196.89,652.90 197.33,662.07 197.77,662.61 198.21,669.95 198.64,679.84 199.08,684.67 199.52,683.59 199.96,680.02 200.40,688.26 200.84,691.57 201.27,692.89 201.71,697.03 202.15,693.76 202.59,698.35 203.03,694.73 203.47,703.67 203.91,696.76 204.34,700.20 204.78,704.28 205.22,697.79 205.66,700.88 206.10,706.19 206.54,703.16 206.98,700.67 207.41,702.77 207.85,700.15 208.29,700.50 208.73,700.94 209.17,701.93 209.61,699.92 210.04,701.60 210.48,702.23 210.92,707.80 211.36,701.62 211.80,700.93 212.24,704.40 212.68,704.88 213.11,700.12 213.55,707.69 213.99,703.35 214.43,699.61 214.87,706.30 215.31,703.26 215.75,701.08 216.18,705.02 216.62,703.82 217.06,703.28 217.50,706.73 217.94,705.30 218.38,704.68 218.81,703.80 219.25,705.43 219.69,705.79 220.13,707.31 220.57,706.21 221.01,704.09 221.45,705.53 221.88,707.24 222.32,707.26 222.76,701.37 223.20,704.02 223.64,704.93 224.08,708.60 224.52,705.07 224.95,705.36 225.39,703.45 225.83,705.55 226.27,706.39 226.71,705.49 227.15,708.60 227.58,704.77 228.02,705.93 228.46,707.58 228.90,704.45 229.34,703.75 229.78,708.60 230.22,707.64 230.65,706.20 231.09,706.40 231.53,707.31 231.97,708.20 232.41,703.59 232.85,705.25 233.29,708.59 233.72,708.60 234.16,704.36 234.60,705.44 235.04,704.26 235.48,705.76 235.92,708.22 236.35,706.60 236.79,708.60 237.23,708.08 237.67,707.12 238.11,706.31 238.55,708.10 238.99,707.26 239.42,706.45 239.86,706.59 240.30,706.24 240.74,706.85 241.18,707.61 241.62,706.08 242.06,707.12 242.49,708.34 242.93,708.07 243.37,707.22 243.81,707.38 244.25,707.03 244.69,707.26 245.12,707.03 245.56,707.46 246.00,708.60 246.44,706.73 246.88,705.89 247.32,706.73 247.76,707.58 248.19,706.73 248.63,708.60 249.07,708.60 249.51,707.28 249.95,708.60 250.39,706.39 250.83,708.60 251.26,708.60 251.70,708.60 252.14,705.31 252.58,707.90 253.02,708.60 253.46,708.42 253.89,706.73 254.33,706.77 254.77,707.20 255.21,705.49 255.65,706.51 256.09,707.47 256.53,706.67 256.96,705.29 257.40,706.19 257.84,706.13 258.28,708.60 258.72,707.66 259.16,706.52 259.60,707.86 260.03,706.09 260.47,706.71 260.91,706.31 261.35,707.76 261.79,704.20 262.23,705.89 262.66,707.77 263.10,707.38 263.54,704.16 263.98,707.94 264.42,706.38 264.86,706.25 265.30,707.50 265.73,708.60 266.17,707.27 266.61,707.05 267.05,706.07 267.49,706.52 267.93,707.49 268.37,706.43 268.80,706.83 269.24,707.26 269.68,707.46 270.12,707.84 270.56,706.65 271.00,708.60 271.43,708.34 271.87,707.53 272.31,708.60 272.75,708.09 273.19,708.60 273.63,708.41 274.07,706.82 274.50,706.82 274.94,707.61 275.38,707.84 275.82,708.60 276.26,705.22 276.70,706.89 277.13,706.16 277.57,708.60 278.01,707.79 278.45,708.60 278.89,706.56 279.33,706.36 279.77,708.60 280.20,707.62 280.64,706.75 281.08,708.60 281.52,708.60 281.96,708.60 282.40,708.36 282.84,708.60 283.27,707.52 283.71,707.24 284.15,706.76 284.59,706.67 285.03,705.66 285.47,706.09 285.91,708.60 286.34,708.20 286.78,708.60 287.22,708.60 287.66,707.67 288.10,707.56 288.54,706.94 288.97,708.60 289.41,708.60 289.85,707.59 290.29,707.82 290.73,707.96 291.17,707.65 291.61,708.53 292.04,706.68 292.48,707.12" fill="none" stroke="#111" stroke-width="0.6"/><line x1="66.8" y1="708.6" x2="70.4" y2="708.6" stroke="#444" stroke-width="0.6"/><text transform="translate(61,708.6) rotate(-90)" font-size="6.9" text-anchor="middle" font-family="Liberation Sans" fill="#222">0</text><line x1="66.8" y1="644.6" x2="70.4" y2="644.6" stroke="#444" stroke-width="0.6"/><text transform="translate(61,644.6) rotate(-90)" font-size="6.9" text-anchor="middle" font-family="Liberation Sans" fill="#222">50</text><line x1="66.8" y1="580.6" x2="70.4" y2="580.6" stroke="#444" stroke-width="0.6"/><text transform="translate(61,580.6) rotate(-90)" font-size="6.9" text-anchor="middle" font-family="Liberation Sans" fill="#222">100</text><line x1="66.8" y1="516.6" x2="70.4" y2="516.6" stroke="#444" stroke-width="0.6"/><text transform="translate(61,516.6) rotate(-90)" font-size="6.9" text-anchor="middle" font-family="Liberation Sans" fill="#222">150</text><line x1="97.4" y1="716.3" x2="97.4" y2="720.5" stroke="#444" stroke-width="0.6"/><text x="97.4" y="731" font-size="6.4" text-anchor="middle" font-family="Liberation Sans" fill="#222">−200</text><line x1="141.2" y1="716.3" x2="141.2" y2="720.5" stroke="#444" stroke-width="0.6"/><text x="141.2" y="731" font-size="6.4" text-anchor="middle" font-family="Liberation Sans" fill="#222">−100</text><line x1="185.1" y1="716.3" x2="185.1" y2="720.5" stroke="#444" stroke-width="0.6"/><text x="185.1" y="731" font-size="6.4" text-anchor="middle" font-family="Liberation Sans" fill="#222">0</text><line x1="228.9" y1="716.3" x2="228.9" y2="720.5" stroke="#444" stroke-width="0.6"/><text x="228.9" y="731" font-size="6.4" text-anchor="middle" font-family="Liberation Sans" fill="#222">100</text><line x1="272.8" y1="716.3" x2="272.8" y2="720.5" stroke="#444" stroke-width="0.6"/><text x="272.8" y="731" font-size="6.4" text-anchor="middle" font-family="Liberation Sans" fill="#222">200</text><text x="185" y="746.8" font-size="6.4" text-anchor="middle" font-family="Liberation Sans" fill="#222">Distance to peak centre</text><text transform="translate(45.6,613.5) rotate(-90)" font-size="6.5" text-anchor="middle" font-family="Liberation Sans" fill="#222">Number of motif occurrences</text></svg>
<div class="ann" style="left:172px;top:137px;width:139.5px;height:36px;border-radius:8px"></div>
<div class="ann" style="left:321px;top:404px;width:200px;height:26.8px;border-width:6.2px;border-radius:8px"></div>
<div class="ann" style="left:454px;top:779px;width:107.5px;height:41.5px;border-radius:9px"></div>
<svg class="a" style="left:0;top:0;overflow:visible" width="1829" height="837"><rect x="324.3" y="104.1" width="1461.6" height="199.3" rx="33.8" ry="33.8" fill="none" stroke="#3c78d8" stroke-width="6.4"/></svg>
<svg class="a" style="left:0;top:0;overflow:visible" width="1829" height="837"><line x1="455" y1="795.5" x2="321" y2="621" stroke="#3c78d8" stroke-width="4"/><path d="M308.8 605.5 L333 621.5 L317.2 633.5 Z" fill="#3c78d8"/></svg>
<div class="lbl" style="left:135.0px;top:142.22px;font-size:33.9px">A</div>
<div class="lbl" style="left:278.8px;top:401.42px;font-size:33.9px">B</div>
<div class="lbl" style="left:560.8px;top:748.12px;font-size:33.9px">C</div>
<div class="lbl" style="left:1791.8px;top:106.62px;font-size:33.9px">D</div>
</body></html>
